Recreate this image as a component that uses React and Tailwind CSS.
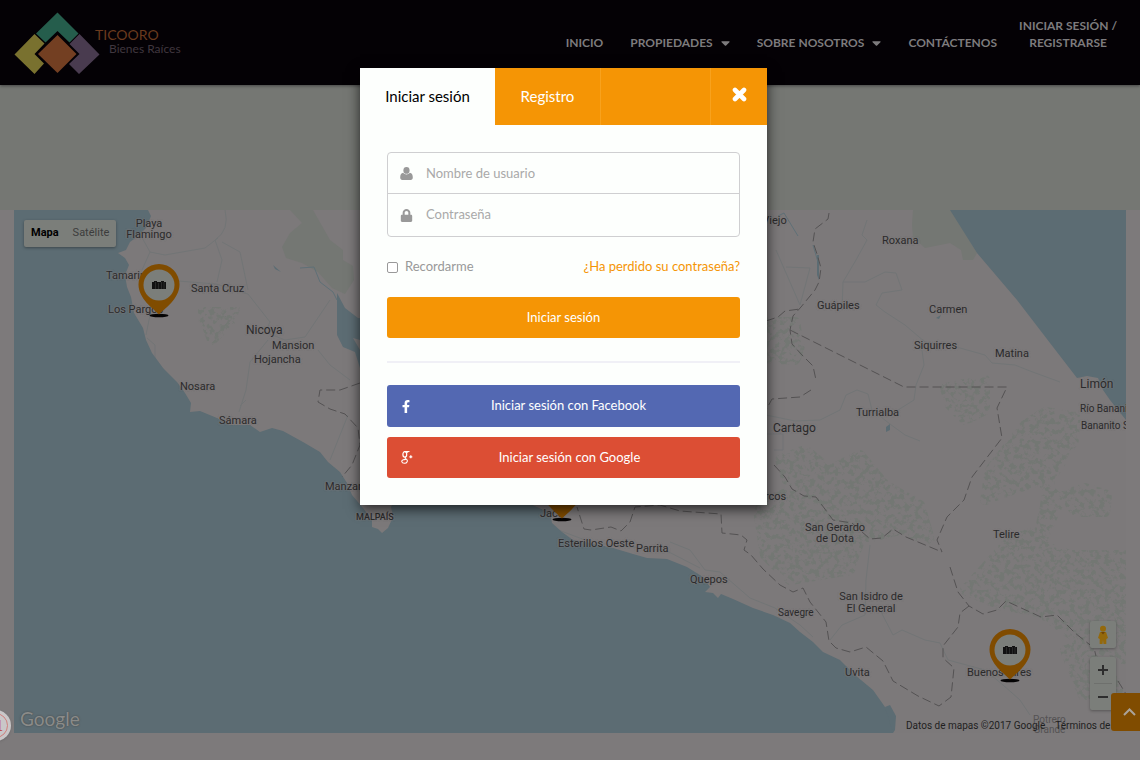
import { FaLock, FaFacebookF, FaCaretDown } from "react-icons/fa";

const LABELS = [
  ["Tamarindo", 106, 276, "text-[11px]"],
  ["Los Pargos", 108, 310, "text-[11px]"],
  ["Santa Cruz", 191, 289, "text-[11px]"],
  ["Nicoya", 246, 330, "text-[12px]"],
  ["Mansion", 272, 346, "text-[11px]"],
  ["Hojancha", 254, 360, "text-[11px]"],
  ["Nosara", 180, 387, "text-[11px]"],
  ["Sámara", 219, 421, "text-[11px]"],
  ["Manzanillo", 325, 487, "text-[11px]"],
  ["MALPAÍS", 356, 518, "text-[9px] font-medium"],
  ["Jacó", 540, 514, "text-[11px]"],
  ["Esterillos Oeste", 558, 544, "text-[11px]"],
  ["Parrita", 636, 549, "text-[11px]"],
  ["Quepos", 690, 580, "text-[11px]"],
  ["Savegre", 778, 612, "text-[10px]"],
  ["Uvita", 845, 673, "text-[11px]"],
  ["Puerto Viejo", 727, 221, "text-[11px]"],
  ["Roxana", 882, 241, "text-[11px]"],
  ["Guápiles", 817, 306, "text-[11px]"],
  ["Carmen", 929, 310, "text-[11px]"],
  ["Siquirres", 914, 346, "text-[11px]"],
  ["Matina", 995, 354, "text-[11px]"],
  ["Limón", 1080, 384, "text-[12px]"],
  ["Río Bananito", 1080, 408, "text-[10px]"],
  ["Bananito Sur", 1081, 425, "text-[10px]"],
  ["Turrialba", 856, 413, "text-[11px]"],
  ["Cartago", 773, 428, "text-[12px]"],
  ["San Marcos", 728, 497, "text-[11px]"],
  ["Telire", 993, 535, "text-[11px]"],
  ["Buenos Aires", 967, 673, "text-[11px]"],
];

const STACKED = [
  [["Playa", "Flamingo"], 149, 229, "text-[11px] leading-[11px]"],
  [["San Gerardo", "de Dota"], 835, 533, "text-[11px] leading-[11px]"],
  [["San Isidro de", "El General"], 871, 603, "text-[11px] leading-[12px]"],
];

const BORDERS = [
  "M829 213 L828 219 L815 229 L813 242 L817 254 L821 268 L819 282 L815 290 L801 307 L793 316 L790 330 L792 344 L802 355 L813 366 L816 380",
  "M766 321 L778 317 L785 311 L800 309",
  "M790 330 L904 387 L1007 387 L997 408 L1002 438 L972 477 L964 500 L947 517 L937 540 L942 552",
  "M811 390 L800 397 L772 399 L766 410",
  "M774 465 L785 477 L792 489 L804 496 L816 497 L833 520 L852 523 L870 539 L882 538 L893 529 L906 537 L942 552",
  "M950 567 L958 592 L969 606 L983 614 L997 610 L1006 601 L1019 607 L1041 617 L1057 615 L1075 633 L1094 648 L1096 656",
  "M969 606 L960 613 L958 627 L943 646 L943 658 L954 668 L951 697 L939 706 L918 696 L893 681 L883 661 L866 647 L850 652 L836 648 L829 641 L826 622 L810 602 L803 588 L793 592 L780 585 L763 569 L751 555 L744 550 L747 540 L741 535 L722 533 L721 514 L680 511 L660 505 L635 507 L630 522 L621 531 L611 527 L591 530 L584 529 L577 507",
  "M360 383 L340 390 L320 390 L318 402 L330 409 L345 414 L358 428 L360 445 L352 465 L342 477",
  "M1118 681 L1126 694",
];

const ROADS = [
  "M225 210 Q230 230 215 240 L222 260 L217 282",
  "M135 225 L150 252 L165 255 L205 248 L218 238",
  "M150 252 L142 270 M178 281 L216 284 L248 294 L270 322 L265 332 L285 340 L305 337 L330 300",
  "M222 242 L240 252 L248 290",
  "M268 340 L250 362 L246 390 L239 412 M246 400 L240 406",
  "M146 335 L150 315 M147 338 L155 345 L155 358 L190 405",
  "M318 350 L330 365 L350 380 M348 415 L330 460",
  "M867 220 L862 235 L867 240 L856 260 L843 282 L842 310",
  "M843 282 L865 282 L885 272 L896 273 L902 290 L882 293 L876 305 L885 312 L905 325 L925 342 L960 348 L985 355 L992 363 L1015 365 L1030 371 L1060 382",
  "M776 250 L800 305 L810 268 L786 267",
  "M922 350 L924 365 L916 385 L914 400 L890 415 M795 421 L820 420 L840 410 L846 395 L857 390 L868 394 L872 410 L890 424 L905 435 L920 441",
  "M766 415 L795 421 M766 434 L783 434 L783 450 L774 450",
  "M870 545 L866 580 L865 615 L842 625 L830 640 M880 610 L893 635 L902 630 L925 640 L940 643 L948 660 L985 670 L1003 685 L1020 700 L1030 715",
  "M553 528 L585 540 L610 545 L665 550 L700 568 M670 542 L690 550 L705 570 L720 572 L750 598 L775 608 L800 625 L813 637",
];

const PARKS = [
  "M913 210 L951 210 L977 253 L973 260 L963 260 L961 250 L950 243 L925 248 L913 237 L912 225 Z",
  "M290 210 L302 223 L290 233 L282 247 L286 258 L302 263 L318 272 L332 288 L345 294 L354 280 L353 266 L343 260 L343 250 L330 240 L313 210 Z",
];

const FORESTS = [
  "M766 322 L795 322 L800 350 L795 360 L766 358 Z",
  "M945 388 L985 380 L985 410 L965 420 L950 405 Z",
  "M1025 425 L1045 412 L1075 417 L1074 440 L1050 480 L1040 530 L1010 540 L965 590 L1000 605 L1040 612 L1090 648 L1126 660 L1126 555 L1070 555 L1040 545 L1060 500 L1040 480 L985 500 L990 470 Z",
  "M780 460 L805 450 L830 470 L860 455 L885 485 L920 505 L930 540 L900 530 L860 540 L850 570 L790 580 L765 555 L758 510 L790 490 Z",
  "M1065 495 L1085 488 L1107 495 L1105 512 L1075 512 Z",
  "M198 315 L215 307 L235 308 L230 322 L212 340 L205 320 Z",
  "M1065 650 L1100 640 L1118 690 L1085 700 Z",
];

function MapDrawing() {
  return (
    <svg className="absolute top-0 left-0 h-full w-full" viewBox="14 210 1112 523" preserveAspectRatio="xMinYMin slice" aria-hidden="true">
      <defs>
        <filter id="grain" x="0" y="0" width="100%" height="100%" colorInterpolationFilters="sRGB">
          <feTurbulence type="fractalNoise" baseFrequency="0.2" numOctaves="3" seed="7" />
          <feColorMatrix values="0 0 0 0 0.451  0 0 0 0 0.467  0 0 0 0 0.451  8 0 0 0 -3.9" />
          <feComposite in2="SourceGraphic" operator="in" />
        </filter>
      </defs>
      <rect x="14" y="210" width="1112" height="523" fill="#7c797a" />
      {PARKS.map((d) => <path key={d} d={d} fill="#747773" />)}
      <g filter="url(#grain)">
        {FORESTS.map((d) => <path key={d} d={d} strokeWidth="10" stroke="#000" strokeLinejoin="round" />)}
      </g>
      <g fill="none" stroke="#727576" strokeWidth="1">
        {ROADS.map((d) => <path key={d} d={d} />)}
      </g>
      <g fill="#5c6c73">
        <path d="M14 210 H148 L151 216 L146 228 L138 236 L130 242 L126 250 L118 253 L125 258 L129 265 L125 275 L127 287 L131 297 L134 313 L143 328 L146 340 L152 353 L163 368 L177 382 L185 393 L191 403 L190 412 L200 411 L217 418 L230 425 L250 425 L260 432 L272 428 L283 431 L303 442 L320 452 L328 462 L340 472 L347 483 L352 495 L363 508 L372 520 L372 527 L378 529 L382 533 L388 528 L393 517 L391 507 L400 490 H500 L550 513 L552 523 L562 532 L573 540 L590 543 L613 548 L633 554 L647 558 L667 559 L687 567 L703 577 L710 587 L705 592 L713 593 L718 598 L721 594 L733 599 L753 608 L773 615 L790 623 L800 632 L813 642 L823 652 L840 660 L855 675 L873 690 L885 707 L892 718 L893 733 H14 Z" />
        <path d="M950 210 H1126 V420 L1110 400 L1103 390 L1098 378 L1087 376 L1077 378 L1050 343 L1017 300 L977 253 Z" />
        <path d="M337 293 L345 308 L358 318 L380 320 V370 L360 368 L355 352 L343 347 L337 335 Z" />
        <path d="M885 707 L890 705 L896 716 L895 730 L893 733 Z" />
        <path d="M886 427 L890 424 L890 430 L886 432 Z M936 318 L941 315 L939 319 Z M817 255 L819 255 L819 280 L817 275 Z M273 265 L281 272 L275 269 Z" />
      </g>
      <path d="M353 338 L360 340 V350 Z" fill="#7c797a" />
      <path d="M300 268 L314 267 L320 282 L333 292 L337 300 M813 245 L818 262 M778 216 L784 213 L798 236" fill="none" stroke="#5f7077" />
      <g fill="none" stroke="#545253" strokeWidth="1" strokeDasharray="9 4">
        {BORDERS.map((d) => <path key={d} d={d} />)}
      </g>
    </svg>
  );
}

function Marker({ x, y }) {
  return (
    <svg className="absolute h-14 w-11" style={{ left: x - 36, top: y - 210 }} viewBox="0 0 44 56" role="img" aria-label="Propiedad">
      <ellipse cx="22" cy="51.500" rx="9.500" ry="1.800" fill="#040304" />
      <path d="M22 50.500 C17 45 1.500 35 1.500 20.500 A20.500 20.500 0 0 1 42.500 20.500 C42.500 35 27 45 22 50.500 Z" fill="#804c00" />
      <circle cx="22" cy="21" r="15.500" fill="#7b7e7a" />
      <path d="M15 18 H17 V17 H20 V18 H24 V17 H27 V18 H29 V25 H15 Z" fill="#111" />
      <path d="M18.500 18 V25 M21.500 19 V25 M24.500 18 V25 M27 18 V25" stroke="#3b3c3b" strokeWidth="0.600" />
    </svg>
  );
}

function Logo() {
  return (
    <a href="#inicio" className="flex items-center">
      <svg className="h-[62px] w-[86px]" viewBox="14 11 86 62" aria-hidden="true">
        <path d="M57.500 11.500 L78.500 32.500 L69.500 41.500 L57.500 30 L45.500 41.500 L36 32.500 Z" fill="#255d4c" />
        <path d="M34.500 33 L44.500 42.500 L34.500 53 L44 62.500 L34.500 73 L14.500 53.500 Z" fill="#79712f" />
        <path d="M79.500 33 L99.500 53.500 L79 73 L69 63 L79.500 53 L69.500 43 Z" fill="#493b4f" />
        <path d="M57.500 34 L76.500 53 L57.500 72 L38 53 Z" fill="#733f22" />
      </svg>
      <span className="-ml-[5px] flex flex-col pb-[2px] leading-[14px]">
        <span className="text-[14px] text-[#6b3a1e]">TICOORO</span>
        <span className="pl-[14px] text-[12px] text-[#40373f]">Bienes Raíces</span>
      </span>
    </a>
  );
}

const NAV = [["INICIO", false], ["PROPIEDADES", true], ["SOBRE NOSOTROS", true], ["CONTÁCTENOS", false]];

function Header() {
  return (
    <header className="relative flex h-[85px] items-center justify-between bg-[#040105] pr-[23px] pl-[14px] shadow-[0_1px_3px_#444]">
      <Logo />
      <nav className="flex items-center text-[12px] font-bold text-[#7d7b7d]">
        <ul className="flex items-center gap-[27px]">
          {NAV.map(([name, menu]) => (
            <li key={name}>
              <a href="#menu" className="flex items-center gap-2">
                {name}
                {menu && <FaCaretDown className="h-[14px] w-[9px]" />}
              </a>
            </li>
          ))}
        </ul>
        <a href="#ingresar" className="ml-[22px] pb-[18px] text-center leading-[17px]">INICIAR SESIÓN /<br />REGISTRARSE</a>
      </nav>
    </header>
  );
}

function MapPanel() {
  return (
    <section aria-label="Mapa" className="relative mx-[14px] h-[523px] overflow-hidden bg-[#7c797a] font-[Roboto,sans-serif] text-[#2b2a2b]">
      <MapDrawing />
      {LABELS.map(([name, x, y, size]) => (
        <span key={name} className={`absolute -translate-y-1/2 whitespace-nowrap [text-shadow:0_0_2px_#7c797a,0_0_2px_#7c797a] ${size}`} style={{ left: x - 14, top: y - 210 }}>{name}</span>
      ))}
      {STACKED.map(([lines, x, y, size]) => (
        <span key={lines[0]} className={`absolute flex -translate-1/2 flex-col items-center whitespace-nowrap [text-shadow:0_0_2px_#7c797a,0_0_2px_#7c797a] ${size}`} style={{ left: x - 14, top: y - 210 }}>
          {lines.map((line) => <span key={line}>{line}</span>)}
        </span>
      ))}
      <span className="absolute top-[505px] left-[1019px] flex flex-col items-center text-[10px] leading-[10px] text-[#555354]"><span>Potrero</span><span>Grande</span></span>
      <Marker x={159} y={264} />
      <Marker x={562} y={468} />
      <Marker x={1010} y={629} />
      <div className="absolute top-[10px] left-[10px] flex h-[27px] items-center gap-[14px] rounded-[2px] bg-[#7b7e7a] px-[7px] text-[11px] shadow-[0_1px_3px_rgba(0,0,0,0.35)]">
        <button type="button" className="font-bold text-black">Mapa</button>
        <button type="button" className="text-[#3c3c3c]">Satélite</button>
      </div>
      <span className="absolute bottom-0 left-[6px] font-[Lato,sans-serif] text-[19px] text-[#8a8b89] [text-shadow:0_0_2px_#444]">Google</span>
      <div className="absolute right-[10px] bottom-[23px] flex flex-col gap-[9px]">
        <button type="button" aria-label="Street View" className="flex h-[27px] w-[26px] items-center justify-center rounded-[2px] bg-[#7b7e7a] shadow-[0_1px_3px_rgba(0,0,0,0.3)]">
          <svg className="h-5 w-3" viewBox="0 0 12 20" aria-hidden="true">
            <circle cx="6" cy="3.800" r="3" fill="#94690c" />
            <path d="M3 7 H9 L11 13 L9.300 14 V19 H6.500 L6 15 L5.500 19 H2.700 V14 L1 13 Z" fill="#94690c" />
            <path d="M4 7 H8 L6 9.500 Z" fill="#6e4308" />
          </svg>
        </button>
        <div className="flex h-[53px] w-[26px] flex-col items-center rounded-[2px] bg-[#7b7e7a] px-1 text-[#2d2d2d] shadow-[0_1px_3px_rgba(0,0,0,0.3)]">
          <button type="button" aria-label="Acercar" className="flex w-full flex-1 items-center justify-center border-b border-[#6e706d]">
            <svg className="size-[10px]" viewBox="0 0 10 10"><path d="M5 0 V10 M0 5 H10" stroke="currentColor" strokeWidth="2" /></svg>
          </button>
          <button type="button" aria-label="Alejar" className="flex w-full flex-1 items-center justify-center">
            <svg className="size-[10px]" viewBox="0 0 10 10"><path d="M0 5 H10" stroke="currentColor" strokeWidth="2" /></svg>
          </button>
        </div>
      </div>
      <div className="absolute bottom-0 left-[892px] flex h-[14px] gap-[10px] text-[10px] leading-[14px] whitespace-nowrap text-[#1f1f1f]">
        <span>Datos de mapas ©2017 Google</span>
        <a href="#terminos">Términos de uso</a>
      </div>
    </section>
  );
}

function UserIcon() {
  return (
    <svg className="size-[13px]" viewBox="0 0 13 13" fill="currentColor" aria-hidden="true">
      <ellipse cx="6.500" cy="3.400" rx="3.100" ry="3.400" />
      <path d="M3.200 5.800 C1 6.300 0.200 8 0.200 10.600 C0.200 12 1 12.900 2.300 12.900 H10.700 C12 12.900 12.800 12 12.800 10.600 C12.800 8 12 6.300 9.800 5.800 C8 8 5 8 3.200 5.800 Z" />
    </svg>
  );
}

function GooglePlus() {
  return (
    <svg className="h-[13px] w-[12px]" viewBox="0 0 12 13" fill="none" stroke="#fff" aria-hidden="true">
      <ellipse cx="3.800" cy="3.400" rx="1.900" ry="2.700" strokeWidth="1.200" />
      <path d="M4 0.600 H7.200 L5.800 1.400 M4.800 6 C3.200 7.200 4.600 7.600 5.600 8.400 C7 9.600 6.400 12.300 3.400 12.300 C0.200 12.300 0 9.400 2.400 8.700 C3.400 8.400 4.400 8.400 5 8.300" strokeWidth="1.100" />
      <path d="M9.800 4.300 V7.300 M8.300 5.800 H11.300" strokeWidth="1.200" />
    </svg>
  );
}

function LoginModal() {
  return (
    <div className="absolute inset-0 flex items-start justify-center pt-[68px] pr-[13px]">
      <div role="dialog" aria-label="Iniciar sesión" className="w-[407px] max-w-full bg-[#fdfffd] shadow-[0_4px_12px_rgba(0,0,0,0.7)]">
        <div className="flex h-[57px] items-stretch text-[15px]">
          <button type="button" className="w-[135px] text-black">Iniciar sesión</button>
          <div className="flex flex-1 items-stretch bg-[#f59505] text-white">
            <button type="button" className="w-[106px] border-r border-[#f8a21d]">Registro</button>
            <span className="flex-1 border-r border-[#f8a21d]" />
            <button type="button" aria-label="Cerrar" className="flex w-[56px] items-center justify-center pb-1">
              <svg className="size-[15px]" viewBox="0 0 15 15" aria-hidden="true">
                <path d="M3 3 L12 12 M12 3 L3 12" stroke="currentColor" strokeWidth="4.600" strokeLinecap="round" />
              </svg>
            </button>
          </div>
        </div>
        <form className="flex flex-col p-[27px] text-[13px]" onSubmit={(e) => e.preventDefault()}>
          <div className="rounded-[4px] border border-[#cfcfd1]">
            <label className="flex h-[41px] items-center gap-[13px] border-b border-[#cfcfd1] px-3 pt-px text-[#999]">
              <UserIcon />
              <input type="text" aria-label="Nombre de usuario" placeholder="Nombre de usuario" className="min-w-0 flex-1 bg-transparent outline-none placeholder:text-[#a9a9a9]" />
            </label>
            <label className="flex h-[42px] items-center gap-[13px] px-3 text-[#999]">
              <FaLock className="size-[13px]" />
              <input type="password" aria-label="Contraseña" placeholder="Contraseña" className="min-w-0 flex-1 bg-transparent outline-none placeholder:text-[#a9a9a9]" />
            </label>
          </div>
          <div className="mt-5 mb-5 flex h-5 items-center justify-between">
            <label className="flex items-center gap-[7px] text-[#999]">
              <input type="checkbox" className="size-[11px] appearance-none rounded-[2px] border border-[#999] bg-white" />
              Recordarme
            </label>
            <a href="#recuperar" className="text-[#f59505]">¿Ha perdido su contraseña?</a>
          </div>
          <button type="submit" className="h-[41px] rounded-[3px] bg-[#f59505] text-white">Iniciar sesión</button>
          <hr className="mt-[23px] mb-[22px] border-t-2 border-[#f0f0f6]" />
          <button type="button" className="flex h-[42px] items-center rounded-[3px] bg-[#5368b2] px-[14px] text-white">
            <FaFacebookF className="h-[13px] w-[10px]" />
            <span className="flex-1 text-center">Iniciar sesión con Facebook</span>
          </button>
          <button type="button" className="mt-[10px] flex h-[41px] items-center rounded-[3px] bg-[#dc4e34] px-[14px] text-white">
            <GooglePlus />
            <span className="flex-1 text-center">Iniciar sesión con Google</span>
          </button>
        </form>
      </div>
    </div>
  );
}

export default function App() {
  return (
    <div className="relative min-h-screen overflow-hidden bg-[#7d7a7b] font-[Lato,sans-serif]">
      <Header />
      <div className="h-[125px] bg-[#757773]" />
      <MapPanel />
      <a href="#avisos" aria-label="Avisos" className="absolute top-[710px] -left-[20px] flex size-[31px] items-center justify-end rounded-full bg-[#c9c7c8] pr-[3px] shadow">
        <span className="flex size-[25px] items-center justify-end rounded-full border border-[#cf7f7c] pr-[4px] font-[Liberation_Serif,serif] text-[16px] font-bold text-[#c0504d]">1</span>
      </a>
      <a href="#top" aria-label="Subir" className="absolute top-[693px] right-0 flex h-[38px] w-[29px] items-center justify-center rounded-l-[3px] bg-[#804c00] pl-2">
        <svg className="h-[8px] w-[13px]" viewBox="0 0 13 8" fill="none" stroke="#aaa39a" strokeWidth="2"><path d="M1 7 L6.500 1.500 L12 7" /></svg>
      </a>
      <LoginModal />
    </div>
  );
}
